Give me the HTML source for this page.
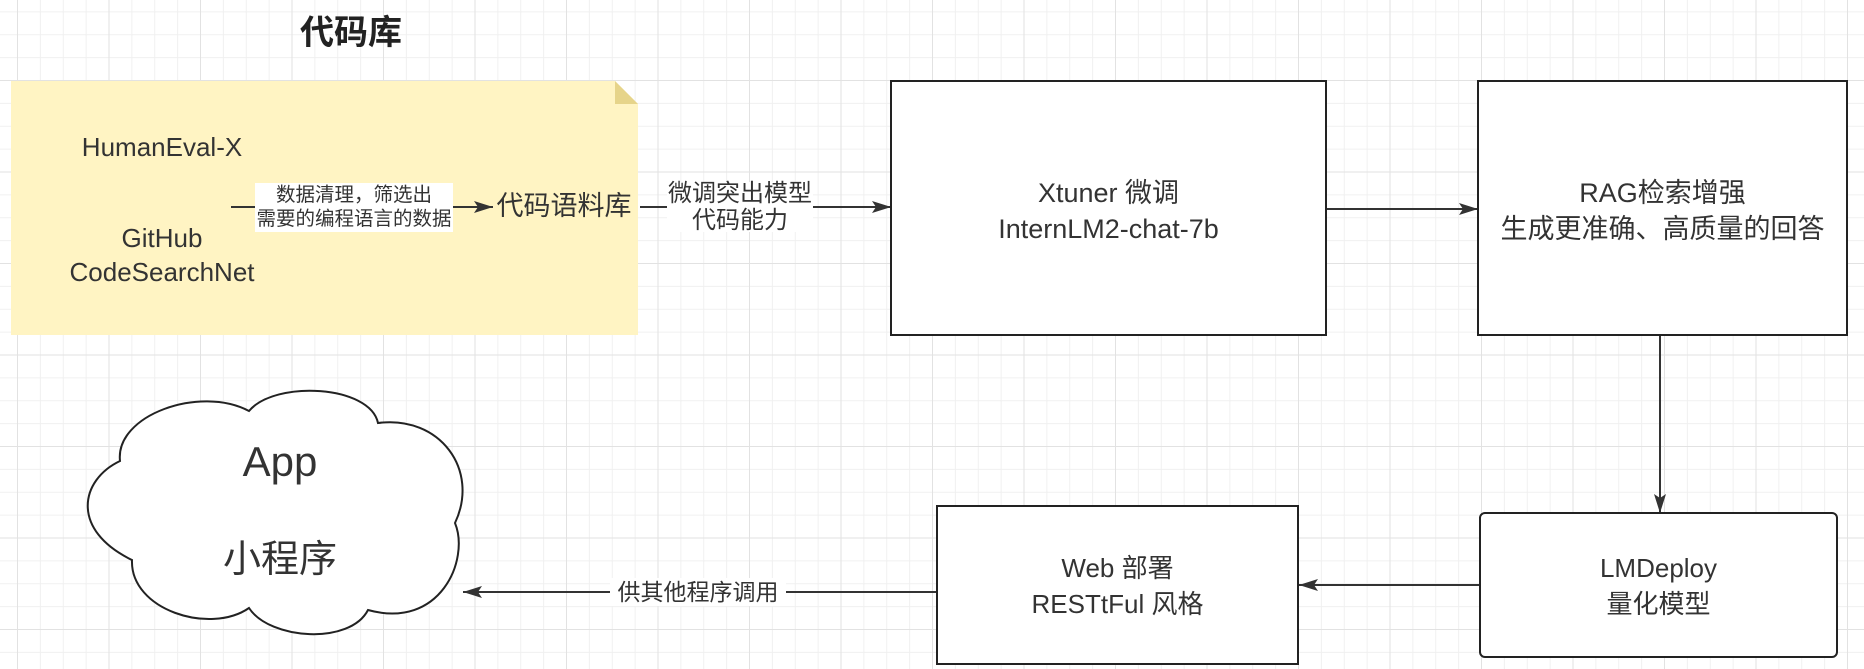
<!DOCTYPE html>
<html><head><meta charset="utf-8"><style>
html,body{margin:0;padding:0;}
body{width:1864px;height:669px;overflow:hidden;background:#fff;position:relative;font-family:"Liberation Sans","Noto Sans CJK SC",sans-serif;color:#333;}
.grid{position:absolute;left:0;top:0;width:1864px;height:669px;
background-image:
linear-gradient(to right,#e2e2e2 1px,transparent 1px),
linear-gradient(to bottom,#e2e2e2 1px,transparent 1px),
linear-gradient(to right,#f0f0f0 1px,transparent 1px),
linear-gradient(to bottom,#f0f0f0 1px,transparent 1px);
background-size:91.5px 91.5px,91.5px 91.5px,22.875px 22.875px,22.875px 22.875px;
background-position:17px 80px,17px 80px,17px 80px,17px 80px;}
.t{position:absolute;text-align:center;white-space:nowrap;line-height:1.25;}
</style></head><body>
<div class="grid"></div>
<svg width="1864" height="669" style="position:absolute;left:0;top:0">
<defs>
<marker id="b" markerWidth="20" markerHeight="12" refX="19" refY="6" orient="auto" markerUnits="userSpaceOnUse"><path d="M0,0 L19,6 L0,12 L4,6 Z" fill="#333"/></marker></defs>
<polygon points="11,81 615,81 638,104 638,335 11,335" fill="#fff4c3"/>
<polygon points="615,81 638,104 615,104" fill="#e6d48a"/>
<line x1="231" y1="207" x2="493" y2="207" stroke="#333" stroke-width="2" marker-end="url(#b)"/>
<line x1="640" y1="207" x2="891" y2="207" stroke="#333" stroke-width="2" marker-end="url(#b)"/>
<line x1="1326" y1="209" x2="1478" y2="209" stroke="#333" stroke-width="2" marker-end="url(#b)"/>
<line x1="1660" y1="335" x2="1660" y2="513" stroke="#333" stroke-width="2" marker-end="url(#b)"/>
<line x1="1480" y1="585" x2="1299" y2="585" stroke="#333" stroke-width="2" marker-end="url(#b)"/>
<line x1="937" y1="592" x2="463" y2="592" stroke="#333" stroke-width="2" marker-end="url(#b)"/>
<rect x="891" y="81" width="435" height="254" fill="#fff" stroke="#222" stroke-width="2"/>
<rect x="1478" y="81" width="369" height="254" fill="#fff" stroke="#222" stroke-width="2"/>
<rect x="937" y="506" width="361" height="158" fill="#fff" stroke="#222" stroke-width="2"/>
<rect x="1480" y="513" width="357" height="144" rx="5" fill="#fff" stroke="#222" stroke-width="2"/>
<path d="M120,461 C115,415 200,385 249,411 C275,380 370,385 378,423 C440,415 480,470 455,523 C470,560 440,630 368,610 C350,645 270,640 249,608 C210,635 130,610 132,560 C70,530 80,480 120,461 Z" fill="#fff" stroke="#222" stroke-width="2"/>
<rect x="255" y="183" width="198" height="49" fill="#fff"/>
<rect x="667" y="182" width="146" height="50" fill="#fff"/>
<rect x="610" y="578" width="176" height="28" fill="#fff"/>
</svg>
<div class="t" style="left:300px;top:12px;font-size:34px;font-weight:bold;color:#222;">代码库</div>
<div class="t" style="left:42px;top:131px;width:240px;font-size:26px;">HumanEval-X</div>
<div class="t" style="left:42px;top:221px;width:240px;font-size:26px;line-height:34px;">GitHub<br>CodeSearchNet</div>
<div class="t" style="left:250px;top:183px;width:208px;font-size:19.5px;line-height:24px;">数据清理，筛选出<br>需要的编程语言的数据</div>
<div class="t" style="left:490px;top:190px;width:148px;font-size:27px;">代码语料库</div>
<div class="t" style="left:662px;top:180px;width:156px;font-size:24px;line-height:27px;">微调突出模型<br>代码能力</div>
<div class="t" style="left:891px;top:175px;width:435px;font-size:27px;line-height:36px;">Xtuner 微调<br>InternLM2-chat-7b</div>
<div class="t" style="left:1478px;top:175px;width:369px;font-size:27px;line-height:36px;">RAG检索增强<br>生成更准确、高质量的回答</div>
<div class="t" style="left:937px;top:550px;width:361px;font-size:26px;line-height:36px;">Web 部署<br>RESTtFul 风格</div>
<div class="t" style="left:1480px;top:550px;width:357px;font-size:26px;line-height:36px;">LMDeploy<br>量化模型</div>
<div class="t" style="left:610px;top:578px;width:176px;font-size:23px;line-height:28px;">供其他程序调用</div>
<div class="t" style="left:200px;top:436px;width:160px;font-size:42px;">App</div>
<div class="t" style="left:200px;top:537px;width:160px;font-size:38px;">小程序</div>
</body></html>
